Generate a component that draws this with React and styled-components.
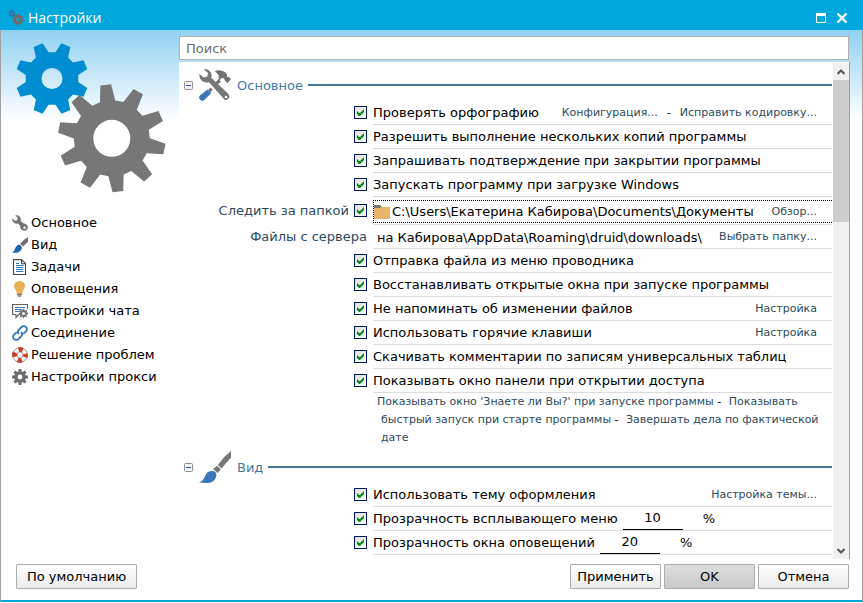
import React from "react";
import styled, { createGlobalStyle, css } from "styled-components";

const GlobalStyle = createGlobalStyle`
  * { box-sizing: border-box; }
  body {
    margin: 0;
    background: #fff;
    font: 13px/18px "DejaVu Sans", Verdana, sans-serif;
    color: #000;
  }
  button, input { font: inherit; color: inherit; }
  a { color: #2c4a5c; text-decoration: none; }
`;

const Window = styled.div`
  min-height: 100vh;
  display: flex;
  flex-direction: column;
  padding-bottom: 1px;
`;

const TitleBar = styled.header`
  display: flex;
  align-items: center;
  gap: 4px;
  height: 30px;
  padding: 6px 15px 0 8px;
  background: #00a8de;
  color: #fff;
`;

const Title = styled.h1`
  flex: 1;
  margin: 0;
  font: 400 14px/24px "Open Sans", "Noto Sans", sans-serif;
`;

const TitleButton = styled.button`
  display: flex;
  padding: 0;
  margin-left: 6px;
  border: 0;
  background: none;
`;

const Client = styled.div`
  flex: 1;
  display: flex;
  flex-direction: column;
  border: 1px solid #a0a0a0;
  border-width: 0 1px 2px;
  border-bottom-color: #00a8de;
  background: linear-gradient(#90d1f2, #fff 90px);
`;

const Columns = styled.div`
  flex: 1;
  display: grid;
  grid-template-columns: 178px minmax(0, 1fr);
  padding-right: 12px;
`;

const Sidebar = styled.aside`
  display: flex;
  flex-direction: column;
`;

const GearsArt = styled.svg`
  display: block;
  width: 178px;
  height: 182px;
`;

const Nav = styled.nav`
  display: flex;
  flex-direction: column;
  padding-left: 11px;
`;

const NavLink = styled.a`
  display: flex;
  align-items: center;
  gap: 3px;
  height: 22px;
  color: #000;
`;

const Main = styled.main`
  display: flex;
  flex-direction: column;
  gap: 2px;
  padding-top: 6px;
`;

const Search = styled.input`
  width: calc(100% - 1px);
  height: 24px;
  padding: 0 6px;
  border: 1px solid #b0b0b0;
  background: #fff;
  outline: none;
  &::placeholder { color: #6d6d6d; opacity: 1; }
`;

const Panel = styled.div`
  flex: 1;
  display: grid;
  grid-template-columns: minmax(0, 1fr) 16px;
  column-gap: 1px;
  border-right: 1px solid #a0a0a0;
  background: #fff;
`;

const SectionHead = styled.div`
  display: flex;
  align-items: center;
  height: 32px;
  margin-top: ${(p) => (p.$first ? 7 : 4)}px;
  padding-left: 5px;
`;

const Toggle = styled.button`
  display: flex;
  padding: 0;
  border: 0;
  margin-right: 6px;
  background: none;
`;

const SectionTitle = styled.h2`
  margin: 0 5px 0 6px;
  padding-top: 2px;
  font-size: 13px;
  font-weight: 400;
  color: #447a9e;
`;

const Rule = styled.div`
  flex: 1;
  height: 2px;
  background: #447a9c;
`;

const Row = styled.div`
  display: grid;
  grid-template-columns: 194px minmax(0, 1fr);
  height: ${(p) => (p.$tall ? 28 : 24)}px;
`;

const Lead = styled.div`
  display: flex;
  align-items: center;
  justify-content: flex-end;
  gap: 5px;
  padding: 0 6px 1px 0;
  color: #2c4a5c;
`;

const Check = styled.input.attrs({ type: "checkbox", defaultChecked: true })`
  appearance: none;
  display: grid;
  place-items: center;
  width: 13px;
  height: 13px;
  margin: 0;
  border: 1px solid #001c60;
  background: linear-gradient(135deg, #dcdcd7, #fff);
  &:checked::after {
    content: "";
    width: 7px;
    height: 7px;
    background: #008a0e;
    clip-path: polygon(0 2px, 2px 4px, 3px 4px, 7px 0, 7px 3px, 3px 7px, 2px 7px, 0 5px);
  }
`;

const Body = styled.div`
  display: flex;
  align-items: center;
  padding: ${(p) => (p.$tall ? 2 : 1)}px 15px 0 0;
  border-bottom: 1px solid #dcdcdc;
`;

const Label = styled.label`
  white-space: nowrap;
`;

const Actions = styled.div`
  display: flex;
  gap: 9px;
  margin-left: auto;
  font-size: 11px;
  white-space: nowrap;
`;

const PathBox = styled.div`
  flex: 1;
  display: flex;
  align-items: center;
  height: 22px;
  margin-right: -15px;
  padding-right: 15px;
  ${(p) => p.$focused && css`
    height: 23px;
    border: 1px dotted #000;
    border-right: 0;
  `}
`;

const PathInput = styled.input`
  flex: 1;
  min-width: 0;
  height: 20px;
  padding: 0 2px 0 ${(p) => (p.$indent ? 4 : 2)}px;
  border: 0;
  background: none;
  outline: none;
`;

const Percent = styled.input`
  width: 60px;
  height: 22px;
  margin: 0 20px 0 5px;
  padding: 0 0 3px;
  border: 0;
  border-bottom: 1px solid #000;
  background: none;
  text-align: center;
  outline: none;
`;

const MoreLinks = styled.p`
  margin: 0 0 0 194px;
  padding: 0 10px 0 8px;
  text-indent: -4px;
  font-size: 11px;
  line-height: 18px;
  a + a { margin-left: 4px; }
`;

const ScrollTrack = styled.div`
  display: flex;
  flex-direction: column;
  justify-content: space-between;
  margin-top: 1px;
  background: #f0f0f0;
`;

const ScrollThumb = styled.div`
  width: 16px;
  height: 142px;
  background: #cdcdcd;
`;

const ScrollButton = styled.button`
  display: grid;
  place-items: center;
  width: 16px;
  height: 17px;
  padding: 0;
  border: 0;
  background: none;
`;

const Footer = styled.footer`
  display: flex;
  gap: 3px;
  padding: 5px 13px 11px 15px;
`;

const Button = styled.button`
  width: ${(p) => (p.$wide ? 121 : 91)}px;
  height: 25px;
  padding: 0;
  margin-right: ${(p) => (p.$wide ? "auto" : 0)};
  border: 1px solid #adadad;
  border-radius: 1px;
  background: ${(p) =>
    p.$primary ? "linear-gradient(#dedede, #c9c9c9)" : "linear-gradient(#fff, #ebebeb)"};
`;

function gearPath({ cx, cy, teeth, outer, inner, tip, base, turn, hole }) {
  const at = (r, a) => `${(cx + r * Math.cos(a)).toFixed(2)} ${(cy + r * Math.sin(a)).toFixed(2)}`;
  const points = [];
  for (let i = 0; i < teeth; i++) {
    const a = (turn * Math.PI) / 180 + (i * 2 * Math.PI) / teeth;
    const t = tip / 2 / outer;
    const b = base / 2 / inner;
    points.push(at(inner, a - b), at(outer, a - t), at(outer, a + t), at(inner, a + b));
  }
  return `M${points.join("L")}Z M${cx - hole} ${cy}a${hole} ${hole} 0 1 0 ${hole * 2} 0a${hole} ${hole} 0 1 0 ${-hole * 2} 0Z`;
}

function Gear({ color, ...shape }) {
  return <path d={gearPath(shape)} fill={color} fillRule="evenodd" />;
}

const Icon = ({ size = 16, view = 16, children }) => (
  <svg width={size} height={size} viewBox={`0 0 ${view} ${view}`} aria-hidden="true">
    {children}
  </svg>
);

const WrenchIcon = () => (
  <Icon>
    <path d="M3.2.3Q5.8-.3 7.7 1.5 9.3 3.3 8.7 5.7L10.9 7.9Q13.4 8.1 15 10 16.4 12 15.3 14.3 14.2 16 12 15.8 9.6 15.6 8.5 13.6 7.8 12.2 8.2 10.8L5.8 8.6Q3.4 9.2 1.6 7.6-.1 5.8.3 3.3L2.8 5.7 5.2 5.2 5.7 2.8Z" fill="#757575" />
    <path d="m11 12.800 1.500-1.500 1.500 1.500-1.500 1.500Z" fill="#fff" />
  </Icon>
);

const BrushShape = () => (
  <>
    <path d="M32 0V6.5L22.5 17.5 18.8 14Q24.5 5.6 32 0Z" fill="#777" />
    <path d="m18 14.7 3.8 3.6-3.2 3.7-4.5-4Z" fill="#777" />
    <path d="M13.3 20Q17.8 20.2 17.3 25 16.5 30 11.5 31.4 6.5 32.5 0 31.5 4.2 30.2 6 25.3 8 19.8 13.3 20Z" fill="#3c78b8" />
  </>
);

const SmallBrushIcon = () => (
  <Icon>
    <path d="M16 0v4.5L11.2 9.5 8 6.8Q11.5 2.7 16 0Z" fill="#707070" />
    <path d="M7.3 7.4Q9.9 8.5 10 11 9.6 13.7 6.5 15.2 3.5 16.2.2 15.6 2.2 14.6 3 11.7 4.2 8 7.3 7.4Z" fill="#2165ad" />
  </Icon>
);

const PageIcon = () => (
  <Icon>
    <path d="M1.5.6h8l4 4v10.9h-12Z" fill="#fff" stroke="#444" strokeWidth="1.1" />
    <path d="M9.5.8v4h4" fill="none" stroke="#444" />
    <path d="M4 4.5h3M4 6.5h7.5M4 8.5h7.5M4 10.5h7.5M4 12.5h7.5" stroke="#3476b8" />
  </Icon>
);

const BulbIcon = () => (
  <Icon>
    <path d="M7.5 0Q13 .2 13 5.3 12.8 7.5 11 9.8L10 13H5L4 9.8Q2 7.5 2 5.3 2.2.2 7.5 0Z" fill="#e8b052" />
    <path d="M5 13.5h5M6 15.2h3" stroke="#777" strokeWidth="1.3" />
  </Icon>
);

const ChatIcon = () => (
  <Icon>
    <path d="M15.5 6V1.5H.6v10H4v3l3-3h1" fill="none" stroke="#666" strokeWidth="1.2" />
    <path d="M3 4.5h10M3 6.5h7M3 8.5h5" stroke="#3c78b8" />
    <Gear color="#707070" cx={11.5} cy={10.5} teeth={8} outer={4.7} inner={3.3} tip={1.2} base={1.8} turn={0} hole={1.5} />
  </Icon>
);

const LinkIcon = () => (
  <Icon>
    <g fill="none" stroke="#3577b9" strokeWidth="1.8" strokeLinecap="round">
      <path d="M6.5 8.5Q5 6.7 6.7 4.8L9.8 1.8Q11.8.3 14 2 15.8 4.2 14.2 6.2L11.8 8.4" />
      <path d="M9.5 7.5Q11 9.3 9.3 11.2L6.2 14.2Q4.2 15.7 2 14 .2 11.8 1.8 9.8L4.2 7.6" />
    </g>
  </Icon>
);

const BuoyIcon = () => (
  <Icon>
    <circle cx="8" cy="8" r="5.4" fill="none" stroke="#fff" strokeWidth="4.5" />
    <circle cx="8" cy="8" r="7.4" fill="none" stroke="#8a7070" strokeWidth=".7" />
    <circle cx="8" cy="8" r="3.2" fill="#fff" stroke="#8a7070" strokeWidth=".7" />
    <circle cx="8" cy="8" r="5.4" fill="none" stroke="#ca3b21" strokeWidth="4.8" strokeDasharray="4.24 4.24" strokeDashoffset="2.12" />
  </Icon>
);

const GearIcon = () => (
  <Icon>
    <Gear color="#6c6c6c" cx={8} cy={8} teeth={8} outer={8} inner={5.6} tip={2.8} base={3.4} turn={0} hole={2.4} />
  </Icon>
);

const ToolsIcon = () => (
  <Icon size={32} view={32}>
    <path d="M15.8 2.3Q20.5-.2 25.5 2.8L28 5.5 28 8 30 8 32 10.2 28.5 14 25.8 11.5 25 9.3 22.7 9 20.5 11.3 22 12.5 18.8 15.5 16.5 13.2 20 9.8 19.5 6.2Q18 3.8 15.8 2.3Z" fill="#737373" />
    <path d="m11.5 18.5 2.3 2.3-2.5 2.5-2.3-2.4Z" fill="#777" />
    <path d="M8.5 21 11.8 24 4.5 31.2Q2.5 31.8 1 30 0 28.5 1 27Z" fill="#3c78b8" stroke="#3c78b8" />
    <path d="M4.8.2Q9-.5 11.7 3.2 13.3 5.8 12.2 8.8L29 24.5Q31 26.5 30 29 28.5 31.500 25.800 31L10 13.300Q5.500 14.500 2.300 11.200 0 8.500.300 5L5 8.500 8.300 7.500 9 4Z" fill="#777" />
    <circle cx="27" cy="28" r="1.3" fill="#fff" />
  </Icon>
);

const BigBrushIcon = () => (
  <Icon size={32} view={32}>
    <BrushShape />
  </Icon>
);

const FolderIcon = () => (
  <Icon>
    <path d="M0 1h6l2 2h8v1H0Z" fill="#777" />
    <path d="M0 4h6l1-1h9v12H0Z" fill="#e8b469" />
  </Icon>
);

const AppIcon = () => (
  <Icon>
    <Gear color="#6b6d70" cx={10} cy={9.5} teeth={8} outer={5.8} inner={4.4} tip={2} base={2.6} turn={10} hole={1.8} />
    <Gear color="#356d9f" cx={4} cy={3.5} teeth={8} outer={3.6} inner={2.5} tip={1.2} base={1.4} turn={22} hole={1.2} />
    <circle cx="10" cy="9.5" r="2.4" fill="none" stroke="#8a6460" strokeWidth=".8" />
  </Icon>
);

const Gears = () => (
  <GearsArt viewBox="1 30 178 182" aria-hidden="true">
    <Gear color="#008dd2" cx={52} cy={78.5} teeth={8} outer={36.5} inner={26.5} tip={9.6} base={13.8} turn={22.5} hole={10.5} />
    <Gear color="#777" cx={111.8} cy={138.3} teeth={10} outer={54} inner={38} tip={10.8} base={15.5} turn={-96.5} hole={18.5} />
  </GearsArt>
);

const NAV = [
  ["Основное", WrenchIcon],
  ["Вид", SmallBrushIcon],
  ["Задачи", PageIcon],
  ["Оповещения", BulbIcon],
  ["Настройки чата", ChatIcon],
  ["Соединение", LinkIcon],
  ["Решение проблем", BuoyIcon],
  ["Настройки прокси", GearIcon],
];

function Section({ title, icon, first }) {
  return (
    <SectionHead $first={first}>
      <Toggle type="button" aria-label={`Свернуть: ${title}`}>
        <svg width="9" height="9" aria-hidden="true">
          <rect x=".5" y=".5" width="8" height="8" rx="1" fill="#f3f3f3" stroke="#919191" />
          <path d="M2 4.5h5" stroke="#3050a8" />
        </svg>
      </Toggle>
      {icon}
      <SectionTitle>{title}</SectionTitle>
      <Rule />
    </SectionHead>
  );
}

function Option({ id, text, percent, children }) {
  return (
    <Row>
      <Lead>
        <Check id={id} />
      </Lead>
      <Body>
        <Label htmlFor={id}>{text}</Label>
        {percent && (
          <>
            <Percent aria-label={`${text}, %`} defaultValue={percent} />
            <span>%</span>
          </>
        )}
        {children && <Actions>{children}</Actions>}
      </Body>
    </Row>
  );
}

export default function App() {
  return (
    <Window>
      <GlobalStyle />
      <TitleBar>
        <AppIcon />
        <Title>Настройки</Title>
        <TitleButton type="button" aria-label="Развернуть">
          <svg width="10" height="10" aria-hidden="true">
            <path d="M.5 2v7.5h9V2" fill="none" stroke="#fff" />
            <path d="M0 0h10v3H0Z" fill="#fff" />
          </svg>
        </TitleButton>
        <TitleButton type="button" aria-label="Закрыть">
          <svg width="12" height="12" aria-hidden="true">
            <path d="m1.500 1.500 9 9m0-9-9 9" stroke="#fff" strokeWidth="2.300" />
          </svg>
        </TitleButton>
      </TitleBar>
      <Client>
        <Columns>
          <Sidebar>
            <Gears />
            <Nav>
              {NAV.map(([name, NavIcon]) => (
                <NavLink key={name} href="#">
                  <NavIcon />
                  {name}
                </NavLink>
              ))}
            </Nav>
          </Sidebar>
          <Main>
            <Search type="text" placeholder="Поиск" aria-label="Поиск" />
            <Panel>
              <div>
                <Section first title="Основное" icon={<ToolsIcon />} />
                <Option id="spell" text="Проверять орфографию">
                  <a href="#">Конфигурация...</a>
                  <span>-</span>
                  <a href="#">Исправить кодировку...</a>
                </Option>
                <Option id="copies" text="Разрешить выполнение нескольких копий программы" />
                <Option id="confirm" text="Запрашивать подтверждение при закрытии программы" />
                <Option id="autorun" text="Запускать программу при загрузке Windows" />
                <Row $tall>
                  <Lead>
                    <Label htmlFor="watch">Следить за папкой</Label>
                    <Check id="watch" />
                  </Lead>
                  <Body $tall>
                    <PathBox $focused>
                      <FolderIcon />
                      <PathInput
                        aria-label="Папка"
                        defaultValue={"C:\\Users\\Екатерина Кабирова\\Documents\\Документы"}
                      />
                      <Actions>
                        <a href="#">Обзор...</a>
                      </Actions>
                    </PathBox>
                  </Body>
                </Row>
                <Row>
                  <Lead>
                    <Label htmlFor="server">Файлы с сервера</Label>
                  </Lead>
                  <Body>
                    <PathBox>
                      <PathInput
                        $indent
                        id="server"
                        defaultValue={"на Кабирова\\AppData\\Roaming\\druid\\downloads\\"}
                      />
                      <Actions>
                        <a href="#">Выбрать папку...</a>
                      </Actions>
                    </PathBox>
                  </Body>
                </Row>
                <Option id="explorer" text="Отправка файла из меню проводника" />
                <Option id="restore" text="Восстанавливать открытые окна при запуске программы" />
                <Option id="remind" text="Не напоминать об изменении файлов">
                  <a href="#">Настройка</a>
                </Option>
                <Option id="hotkeys" text="Использовать горячие клавиши">
                  <a href="#">Настройка</a>
                </Option>
                <Option id="comments" text="Скачивать комментарии по записям универсальных таблиц" />
                <Option id="access" text="Показывать окно панели при открытии доступа" />
                <MoreLinks>
                  <a href="#">Показывать окно 'Знаете ли Вы?' при запуске программы</a> -{" "}
                  <a href="#">Показывать быстрый запуск при старте программы</a> -{" "}
                  <a href="#">Завершать дела по фактической дате</a>
                </MoreLinks>
                <Section title="Вид" icon={<BigBrushIcon />} />
                <Option id="theme" text="Использовать тему оформления">
                  <a href="#">Настройка темы...</a>
                </Option>
                <Option id="menu" text="Прозрачность всплывающего меню" percent="10" />
                <Option id="notify" text="Прозрачность окна оповещений" percent="20" />
              </div>
              <ScrollTrack>
                <div>
                  <ScrollButton type="button" aria-label="Вверх">
                    <svg width="8" height="6" aria-hidden="true">
                      <path d="m.5 5 3.5-3.5L7.5 5" fill="none" stroke="#555" strokeWidth="2" />
                    </svg>
                  </ScrollButton>
                  <ScrollThumb />
                </div>
                <ScrollButton type="button" aria-label="Вниз">
                  <svg width="8" height="6" aria-hidden="true">
                    <path d="m.5 1 3.5 3.5L7.5 1" fill="none" stroke="#555" strokeWidth="2" />
                  </svg>
                </ScrollButton>
              </ScrollTrack>
            </Panel>
          </Main>
        </Columns>
        <Footer>
          <Button type="button" $wide>По умолчанию</Button>
          <Button type="button">Применить</Button>
          <Button type="button" $primary>OK</Button>
          <Button type="button">Отмена</Button>
        </Footer>
      </Client>
    </Window>
  );
}
